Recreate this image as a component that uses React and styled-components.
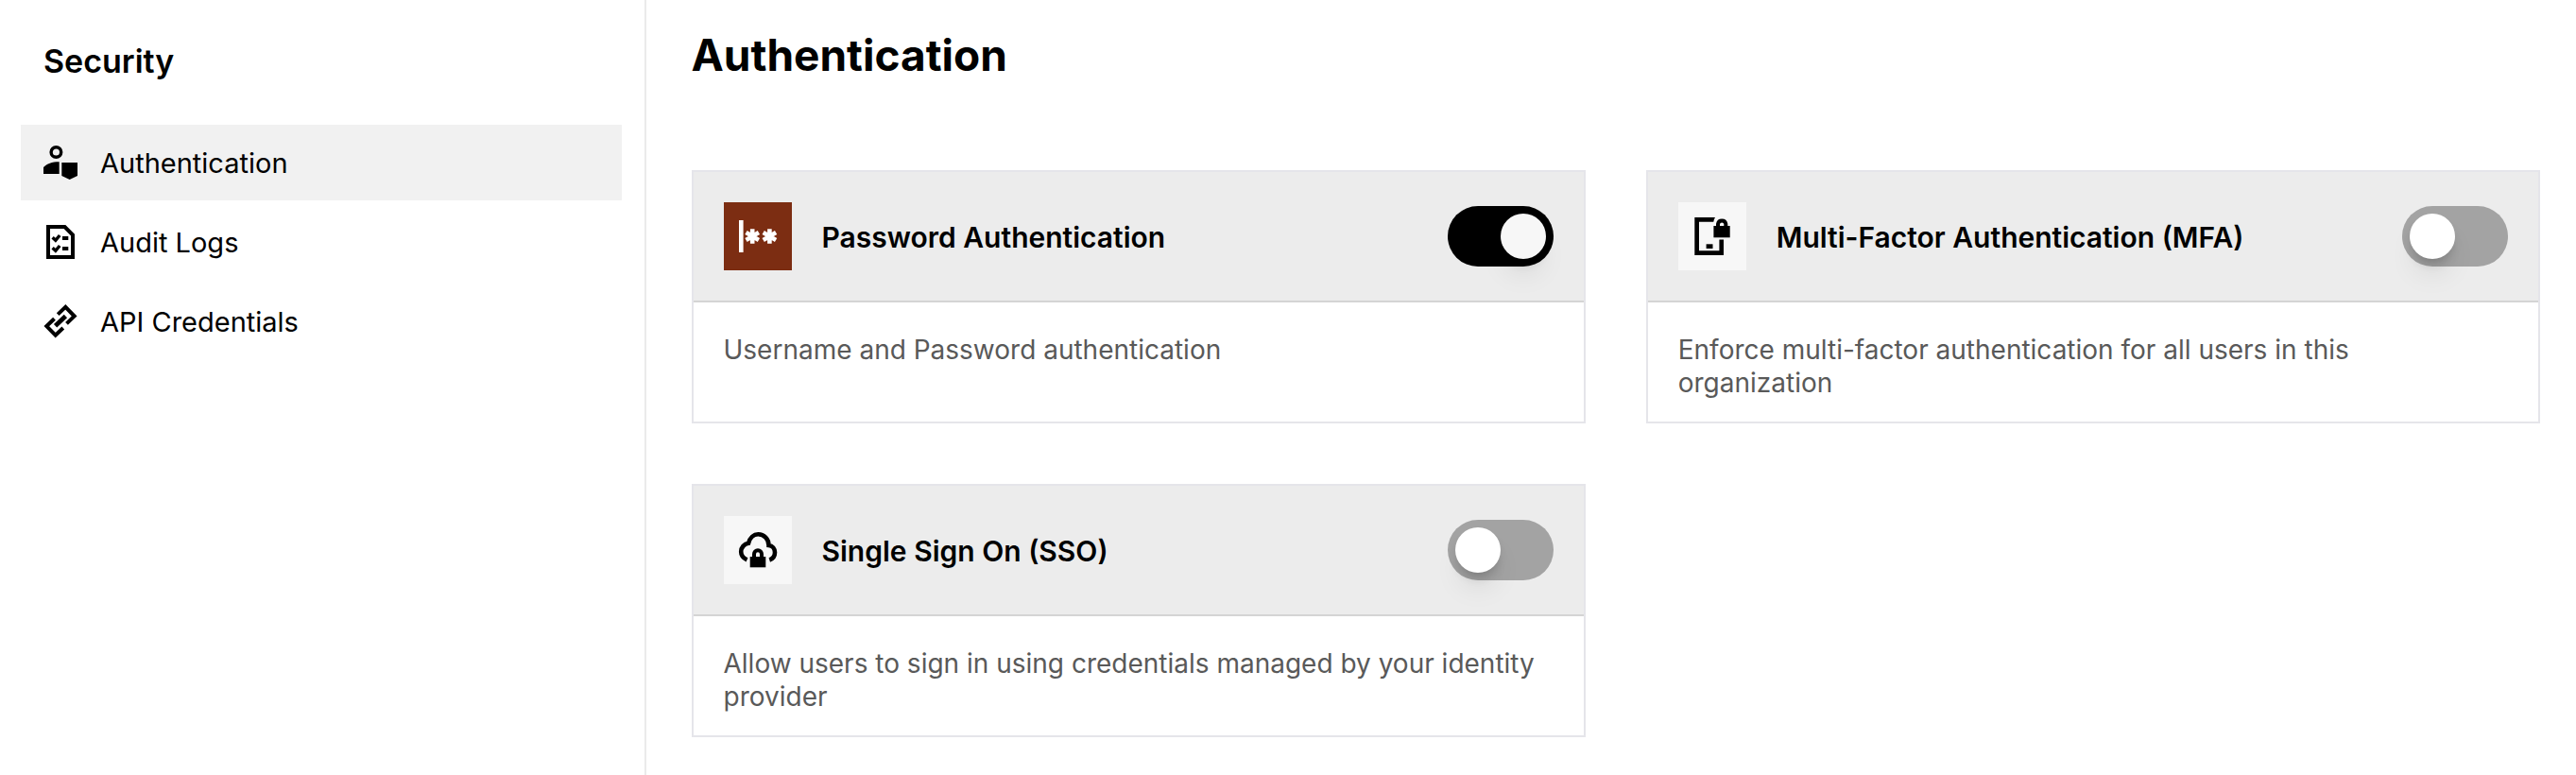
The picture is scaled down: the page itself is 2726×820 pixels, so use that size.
import React, { useState } from 'react';
import styled, { createGlobalStyle } from 'styled-components';

const GlobalStyle = createGlobalStyle`
  * {
    box-sizing: border-box;
  }

  body {
    margin: 0;
    background: #fff;
    color: #000;
    font-family: Inter, "Liberation Sans", sans-serif;
  }
`;

const PageContent = styled.div`
  display: grid;
  grid-template-columns: minmax(0, 1fr) minmax(0, 3fr);
  min-height: 100vh;
`;

const Sidebar = styled.aside`
  padding: 42px 24px 0 22px;
`;

const SidebarTitle = styled.h2`
  margin: 0 0 44px;
  padding: 0 24px;
  font-size: 34px;
  line-height: 46px;
  font-weight: 600;
`;

const NavList = styled.nav`
  display: flex;
  flex-direction: column;
  gap: 4px;
`;

const NavItem = styled.a`
  display: flex;
  align-items: center;
  gap: 24px;
  height: 80px;
  padding: 0 24px;
  color: #000;
  text-decoration: none;
  background: ${({ $active }) => ($active ? '#f1f1f1' : 'transparent')};
`;

const NavLabel = styled.span`
  padding-top: 2px;
  font-size: 29px;
  line-height: 36px;
`;

const NavIcon = styled.svg`
  flex: none;
  width: 36px;
  height: 36px;
`;

const Main = styled.main`
  padding: 28px 38px 40px 48px;
  border-left: 2px solid #ebebeb;
`;

const PageTitle = styled.h1`
  margin: 0 0 92px;
  font-size: 46px;
  line-height: 60px;
  font-weight: 700;
`;

const CardGrid = styled.div`
  display: grid;
  grid-template-columns: repeat(2, minmax(0, 1fr));
  gap: 64px;
`;

const Card = styled.section`
  border: 2px solid #e5e5ea;
`;

const CardHeader = styled.div`
  display: flex;
  align-items: center;
  gap: 32px;
  padding: 32px;
  background: #ececec;
  border-bottom: 2px solid #d4d4d4;
`;

const CardIcon = styled.svg`
  flex: none;
  width: 72px;
  height: 72px;
  color: ${({ $filled }) => ($filled ? '#fff' : '#000')};
  background: ${({ $filled }) => ($filled ? '#7c2d12' : '#f7f7f7')};
`;

const CardTitle = styled.label`
  flex: 1;
  padding-top: 2px;
  font-size: 30px;
  line-height: 36px;
  font-weight: 600;
`;

const CardText = styled.p`
  margin: 0;
  padding: 33px 32px 23px;
  font-size: 28px;
  line-height: 35px;
  color: #595959;
`;

const Switch = styled.input`
  appearance: none;
  display: flex;
  flex: none;
  justify-content: flex-start;
  width: 112px;
  height: 64px;
  margin: 0;
  padding: 8px;
  border-radius: 32px;
  background: #a3a3a3;
  cursor: pointer;

  &::before {
    content: '';
    width: 48px;
    height: 48px;
    border-radius: 50%;
    background: #fff;
    box-shadow: 0 20px 30px -6px rgba(0, 0, 0, 0.1), 0 8px 12px -4px rgba(0, 0, 0, 0.2);
  }

  &:checked {
    justify-content: flex-end;
    background: #000;
  }

  &:checked::before {
    background: #f7f7f7;
  }
`;

const UserShieldIcon = () => (
  <NavIcon viewBox="0 0 36 36" aria-hidden="true">
    <circle cx="13.4" cy="7" r="5.3" fill="none" stroke="currentColor" strokeWidth="3.4" />
    <path d="M0 30v-7c3.500-3.800 9.500-5.800 16.700-5.700V30z" />
    <path d="M19.300 18H36v14l-8.300 4-8.400-4z" />
  </NavIcon>
);

const ChecklistIcon = () => (
  <NavIcon viewBox="0 0 36 36" fill="none" stroke="currentColor" aria-hidden="true">
    <path d="M5 2h17.500L31 10.500V34H5z" strokeWidth="4" />
    <path d="M9.600 13.300l3.200 3L17.200 11M9.600 24.300l3.200 3L17.200 22" strokeWidth="3.4" />
    <path d="M20 14h6.300M20 25h6.300" strokeWidth="4" />
  </NavIcon>
);

const LinkIcon = () => (
  <NavIcon viewBox="0 0 36 36" fill="none" stroke="currentColor" strokeWidth="4" aria-hidden="true">
    <path d="M15.200 10.600l8.100-7.700 9.400 9.600-8.200 7.900" />
    <path d="M20.800 25l-8.100 7.700-9.400-9.600 8.200-7.900" />
    <path d="M12.600 22.800L23.400 12.500" strokeWidth="4.8" />
  </NavIcon>
);

const PasswordIcon = () => (
  <CardIcon $filled viewBox="0 0 72 72" fill="none" stroke="currentColor" strokeWidth="4.6" aria-hidden="true">
    <path d="M18.300 19v34" />
    <path d="M30.200 28.300v15.400M23.500 32.100l13.400 7.800M36.900 32.100l-13.400 7.800" />
    <path d="M48.400 28.300v15.400M41.700 32.100l13.400 7.800M55.100 32.100l-13.400 7.800" />
  </CardIcon>
);

const PhoneLockIcon = () => (
  <CardIcon viewBox="0 0 72 72" aria-hidden="true">
    <path d="M39 16H17.300v40H48V39.500h-4.600v11.800H22V20.700h15.300c.2-1.700.8-3.300 1.700-4.700z" />
    <path d="M29.600 44.300h6.900V49h-6.900z" />
    <path d="M37.400 25h17.300v12.300H37.400z" />
    <path d="M42 26v-3a4.200 4.200 0 0 1 8.300 0v3" fill="none" stroke="currentColor" strokeWidth="4" />
  </CardIcon>
);

const CloudLockIcon = () => (
  <CardIcon viewBox="0 0 72 72" aria-hidden="true">
    <path
      d="M24.500 46.300C20.500 44.500 18.200 41.500 18.200 37.800C18.200 33.300 21.500 29.500 26 28.800C27.500 23 31.500 19.300 36.300 19.300C42.500 19.300 47.500 24 47.500 31C51.500 31.500 54 34.500 54 38.600C54 42 52 45.300 48.300 46.500"
      fill="none"
      stroke="currentColor"
      strokeWidth="4.6"
    />
    <path d="M27.700 43h16.600v11.300H27.700z" />
    <path d="M32 44v-3.800a4 4 0 0 1 8 0V44" fill="none" stroke="currentColor" strokeWidth="4" />
  </CardIcon>
);

const navItems = [
  { id: 'authentication', label: 'Authentication', Icon: UserShieldIcon },
  { id: 'audit-logs', label: 'Audit Logs', Icon: ChecklistIcon },
  { id: 'api-credentials', label: 'API Credentials', Icon: LinkIcon },
];

const methods = [
  {
    id: 'password',
    title: 'Password Authentication',
    text: 'Username and Password authentication',
    Icon: PasswordIcon,
  },
  {
    id: 'mfa',
    title: 'Multi-Factor Authentication (MFA)',
    text: 'Enforce multi-factor authentication for all users in this organization',
    Icon: PhoneLockIcon,
  },
  {
    id: 'sso',
    title: 'Single Sign On (SSO)',
    text: 'Allow users to sign in using credentials managed by your identity provider',
    Icon: CloudLockIcon,
  },
];

const App = () => {
  const [page, setPage] = useState('authentication');
  const [enabled, setEnabled] = useState({ password: true, mfa: false, sso: false });

  const handleToggle = (event) => {
    const { id, checked } = event.target;
    setEnabled((current) => ({ ...current, [id]: checked }));
  };

  return (
    <>
      <GlobalStyle />
      <PageContent>
        <Sidebar>
          <SidebarTitle>Security</SidebarTitle>
          <NavList>
            {navItems.map(({ id, label, Icon }) => (
              <NavItem
                key={id}
                href={`#${id}`}
                $active={page === id}
                aria-current={page === id ? 'page' : undefined}
                onClick={() => setPage(id)}
              >
                <Icon />
                <NavLabel>{label}</NavLabel>
              </NavItem>
            ))}
          </NavList>
        </Sidebar>

        <Main>
          <PageTitle>Authentication</PageTitle>
          <CardGrid>
            {methods.map(({ id, title, text, Icon }) => (
              <Card key={id}>
                <CardHeader>
                  <Icon />
                  <CardTitle htmlFor={id}>{title}</CardTitle>
                  <Switch id={id} type="checkbox" role="switch" checked={enabled[id]} onChange={handleToggle} />
                </CardHeader>
                <CardText>{text}</CardText>
              </Card>
            ))}
          </CardGrid>
        </Main>
      </PageContent>
    </>
  );
};

export default App;
